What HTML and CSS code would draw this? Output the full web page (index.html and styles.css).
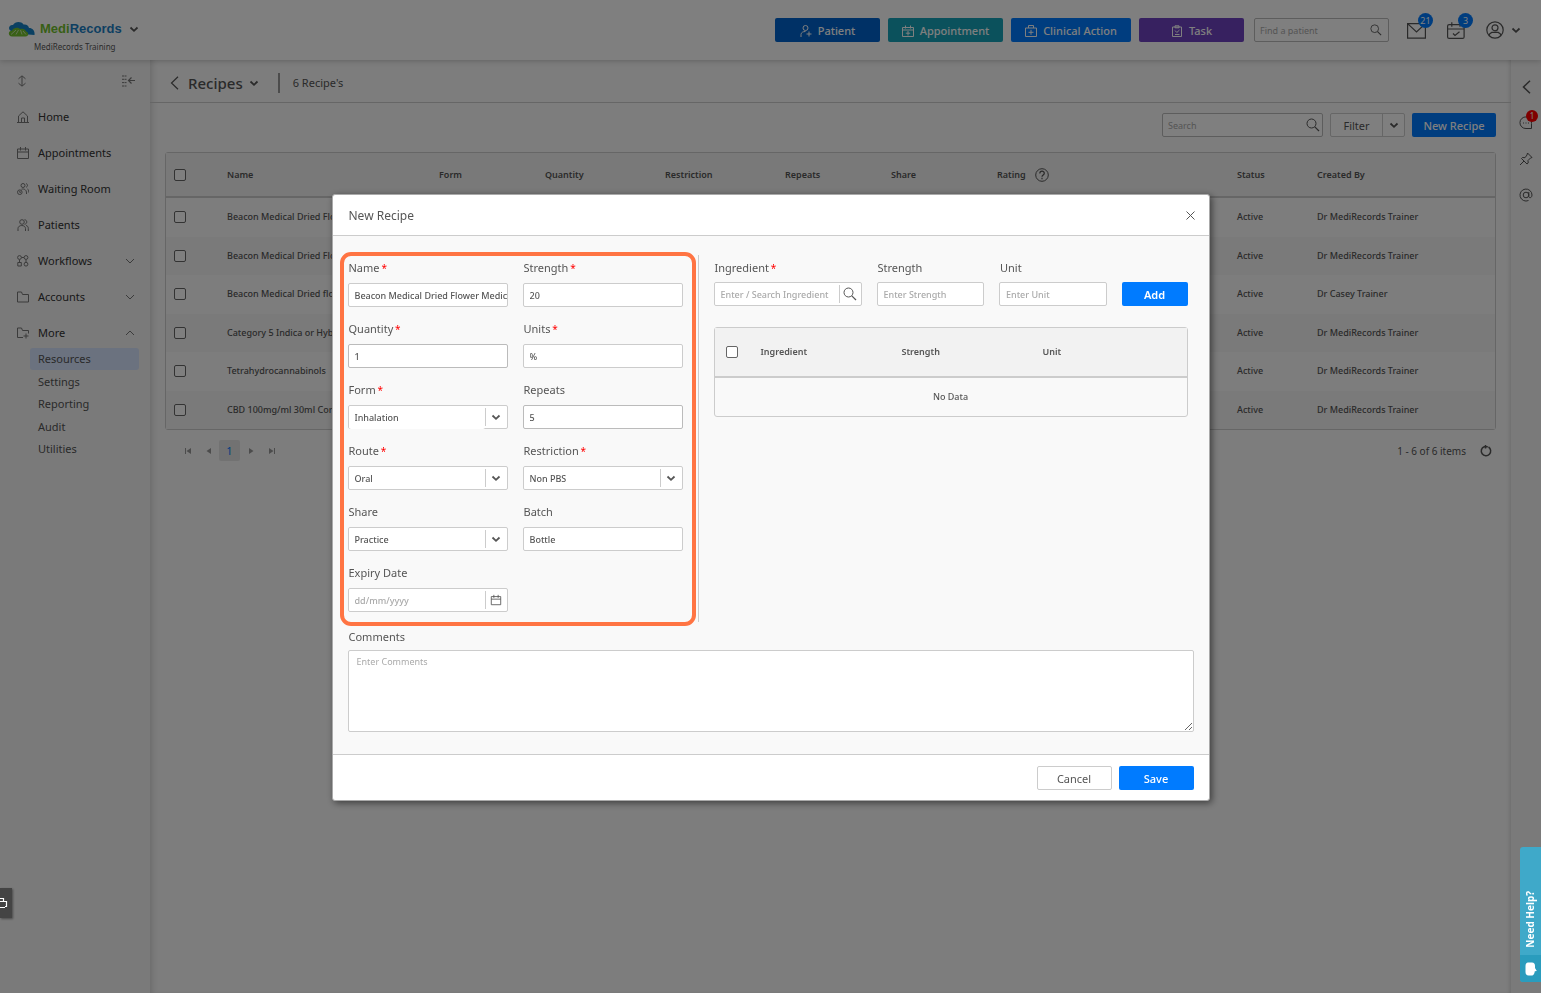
FILE: index.html
```html
<!DOCTYPE html>
<html lang="en">

<head>
    <meta charset="UTF-8">
    <meta name="viewport" content="width=device-width, initial-scale=1.0">
    <title>MediRecords - Recipes</title>
    <link rel="stylesheet" href="styles.css">
</head>

<body>
    <!-- Shared icons -->
    <svg class="icon-defs" aria-hidden="true">
        <symbol id="i-down" viewBox="0 0 10 10"><path d="M1.500 3.500L5 6.800l3.500-3.300" fill="none" stroke="currentColor" stroke-width="1.800"/></symbol>
        <symbol id="i-thin-down" viewBox="0 0 10 10"><path d="M1 3l4 4 4-4" fill="none" stroke="currentColor" stroke-width="1"/></symbol>
        <symbol id="i-search" viewBox="0 0 14 14"><circle cx="5.500" cy="5.500" r="4.500" fill="none" stroke="currentColor"/><path d="M8.800 8.800L13 13" stroke="currentColor" stroke-width="1.200"/></symbol>
        <symbol id="i-calendar" viewBox="0 0 14 14"><path d="M1.500 3h11v9.500h-11zM1.500 6h11M4.500 1v3.500M9.500 1v3.500" fill="none" stroke="currentColor" stroke-linejoin="round"/></symbol>
    </svg>

    <header class="topbar">
        <div class="brand">
            <div class="brand-row">
                <svg class="brand-logo" viewBox="0 0 27 15">
                    <path d="M3 9C-.5 7 1 2.500 5 3 7-.5 13-1 15.500 2.500c3-.5 5 1 5.500 3.500 4 0 6 3 5.500 7L14 12z" fill="#1480c4"/>
                    <path d="M4 14.500C0 14.500-.5 9 4 8.500 5.500 5.500 10 5 12 7c3-1 5.500.5 6 2.500 3 .5 3 5-.5 5z" fill="#72c02c"/>
                    <path d="M3 12.500l5-4.500M8 12.500l2.500-4.500M12.500 8l1.500 4.500M15 9l3 3.500" fill="none" stroke="#cfe8b8" stroke-width=".9"/>
                </svg>
                <span class="brand-name"><span class="brand-green">Medi</span>Records</span>
                <svg class="icon-10"><use href="#i-down"/></svg>
            </div>
            <div class="brand-sub">MediRecords Training</div>
        </div>
        <div class="topbar-actions">
            <button type="button" class="btn btn-patient">
                <svg class="icon-12" viewBox="0 0 12 12" fill="none" stroke="currentColor"><circle cx="5.500" cy="3" r="2.500"/><path d="M1 12V9.500C1 7.500 3 6.500 5.500 6.500M9 6.500v5M6.500 9h5"/></svg>
                Patient
            </button>
            <button type="button" class="btn btn-appointment">
                <svg class="icon-12" viewBox="0 0 12 12" fill="none" stroke="currentColor"><path d="M.5 2.500h11v9H.5zM.5 5h11M3.500.5v3M8.500.5v3M6 6v4.500M3.800 8.200h4.400"/></svg>
                Appointment
            </button>
            <button type="button" class="btn btn-clinical">
                <svg class="icon-12" viewBox="0 0 12 12" fill="none" stroke="currentColor"><path d="M.5 3h11v8.500H.5zM3.500 3V.5h5V3M6 4.800v5M3.500 7.300h5"/></svg>
                Clinical Action
            </button>
            <button type="button" class="btn btn-task">
                <svg class="icon-12" viewBox="0 0 12 12" fill="none" stroke="currentColor"><path d="M1.500 2h9v9.500h-9zM4 .8h4v2H4zM4 5.500l1.800 2L8.500 5M4 9.500h4.500"/></svg>
                Task
            </button>
        </div>
        <div class="search-box find-patient">
            <input type="text" placeholder="Find a patient" aria-label="Find a patient">
            <svg class="icon-12"><use href="#i-search"/></svg>
        </div>
        <div class="topbar-icons">
            <button type="button" class="icon-btn" aria-label="Messages">
                <svg width="19" height="17" viewBox="0 0 19 17" fill="none" stroke="currentColor" stroke-width="1.200"><path d="M.6 1.600h17.800v14.500H.6zM.6 1.600L9.500 10l8.900-8.400"/></svg>
                <span class="badge">21</span>
            </button>
            <button type="button" class="icon-btn" aria-label="Tasks">
                <svg width="18" height="17" viewBox="0 0 18 17" fill="none" stroke="currentColor" stroke-width="1.200"><rect x=".6" y="2.600" width="16.500" height="13.800" rx="1.500"/><path d="M.6 7h16.500M4.800.2v4.500M13 .2v4.500M6 11.500l2 2 4.500-3.800"/></svg>
                <span class="badge">3</span>
            </button>
            <button type="button" class="icon-btn user-btn" aria-label="Account">
                <svg width="18" height="18" viewBox="0 0 18 18" fill="none" stroke="currentColor" stroke-width="1.200"><circle cx="9" cy="9" r="8.200"/><circle cx="9" cy="6.800" r="3"/><path d="M3.500 15v-2l2.200-1.600h6.600l2.200 1.600v2"/></svg>
                <svg class="icon-10"><use href="#i-down"/></svg>
            </button>
        </div>
    </header>

    <div class="layout">
        <nav class="sidebar">
            <div class="sidebar-tools">
                <svg width="10" height="12" viewBox="0 0 10 12" fill="none" stroke="currentColor"><path d="M5 1v10M1.500 3.800L5 .8l3.500 3M1.500 8.200l3.500 3 3.500-3"/></svg>
                <svg width="13" height="12" viewBox="0 0 13 12" fill="none" stroke="currentColor"><path d="M0 1h5M0 4.300h5M0 7.600h5M0 11h5" stroke-dasharray="2 .5"/><path d="M13 5.500H6.500M9.500 2.500l-3 3 3 3" stroke-width="1.200"/></svg>
            </div>
            <ul class="menu">
                <li><a href="#">
                    <svg class="icon-12" viewBox="0 0 12 12" fill="none" stroke="currentColor"><path d="M0 11.500h12M1.500 11.500V5L6 .8 10.500 5v6.500M4.500 11.500V7h3v4.500"/></svg>
                    Home</a></li>
                <li><a href="#">
                    <svg class="icon-12" viewBox="1 1 12 12"><use href="#i-calendar" width="14" height="14"/></svg>
                    Appointments</a></li>
                <li><a href="#">
                    <svg class="icon-12" viewBox="0 0 12 12" fill="none" stroke="currentColor"><circle cx="6" cy="2.500" r="2"/><path d="M9 .6c2 .4 2 3.200 0 3.600M4.500 6.200c3-.8 5 .8 5 3.800v1M10.500 6c1 .5 1.200 1.500 1.200 3.500"/><circle cx="2.800" cy="9.200" r="2.300"/><path d="M2.800 7.800v1.600h1"/></svg>
                    Waiting Room</a></li>
                <li><a href="#">
                    <svg class="icon-12" viewBox="0 0 12 12" fill="none" stroke="currentColor"><circle cx="5" cy="3" r="2.300"/><path d="M7.500.7c3 .2 3 4.300 0 4.600M1 12V9.500c0-4 7.500-4 7.500 0V12M9 6.500c1.500.3 2.300 1.200 2.300 3V12"/></svg>
                    Patients</a></li>
                <li><a href="#">
                    <svg class="icon-12" viewBox="0 0 12 12" fill="none" stroke="currentColor"><circle cx="2.500" cy="2.500" r="1.900"/><circle cx="9" cy="2.500" r="1.900"/><circle cx="9" cy="9.200" r="1.900"/><path d="M.8 7.500h3.500V11H.8zM4.500 2.500H7M2.500 4.500v3M9 4.500v2.500"/></svg>
                    Workflows<svg class="icon-10 caret"><use href="#i-thin-down"/></svg></a></li>
                <li><a href="#">
                    <svg class="icon-12" viewBox="0 0 12 12" fill="none" stroke="currentColor"><path d="M.5 11V1h4l1 2.500h6V11z"/></svg>
                    Accounts<svg class="icon-10 caret"><use href="#i-thin-down"/></svg></a></li>
                <li><a href="#">
                    <svg class="icon-12" viewBox="0 0 12 12" fill="none" stroke="currentColor"><path d="M6 10.500H.5V1h4l1 2.500h6v3M9 6.500v5M6.500 9h5"/></svg>
                    More<svg class="icon-10 caret caret-up"><use href="#i-thin-down"/></svg></a>
                    <ul class="submenu">
                        <li><a href="#" class="active">Resources</a></li>
                        <li><a href="#">Settings</a></li>
                        <li><a href="#">Reporting</a></li>
                        <li><a href="#">Audit</a></li>
                        <li><a href="#">Utilities</a></li>
                    </ul>
                </li>
            </ul>
        </nav>

        <main class="content">
            <div class="page-title">
                <svg width="9" height="14" viewBox="0 0 9 14" fill="none" stroke="currentColor" stroke-width="1.200"><path d="M8 .8L1.500 7 8 13.200"/></svg>
                <h1>Recipes</h1>
                <svg class="icon-10"><use href="#i-down"/></svg>
                <span class="count">6 Recipe's</span>
            </div>

            <div class="toolbar">
                <div class="search-box grid-search">
                    <input type="text" placeholder="Search" aria-label="Search">
                    <svg class="icon-14"><use href="#i-search"/></svg>
                </div>
                <div class="filter">
                    <button type="button">Filter</button>
                    <button type="button" aria-label="Filter options"><svg class="icon-10"><use href="#i-down"/></svg></button>
                </div>
                <button type="button" class="btn btn-primary">New Recipe</button>
            </div>

            <div class="grid-wrap">
                <table class="grid">
                    <colgroup>
                        <col class="c-check"><col class="c-name"><col class="c-small"><col class="c-mid"><col class="c-mid">
                        <col class="c-small"><col class="c-small"><col class="c-rating"><col class="c-status"><col>
                    </colgroup>
                    <thead>
                        <tr>
                            <th><input type="checkbox" aria-label="Select all"></th>
                            <th>Name</th>
                            <th>Form</th>
                            <th>Quantity</th>
                            <th>Restriction</th>
                            <th>Repeats</th>
                            <th>Share</th>
                            <th><span class="rating">Rating
                                <svg width="14" height="14" viewBox="0 0 14 14" fill="none" stroke="currentColor"><circle cx="7" cy="7" r="6.300"/><path d="M4.800 5.500c0-3 4.500-3 4.500-.3 0 1.800-2.300 1.700-2.300 3.600M7 9.800v1.400" stroke-width="1.200"/></svg></span></th>
                            <th>Status</th>
                            <th>Created By</th>
                        </tr>
                    </thead>
                    <tbody>
                        <tr><td><input type="checkbox" aria-label="Select row"></td><td>Beacon Medical Dried Flower</td><td></td><td></td><td></td><td></td><td></td><td></td><td>Active</td><td>Dr MediRecords Trainer</td></tr>
                        <tr><td><input type="checkbox" aria-label="Select row"></td><td>Beacon Medical Dried Flower</td><td></td><td></td><td></td><td></td><td></td><td></td><td>Active</td><td>Dr MediRecords Trainer</td></tr>
                        <tr><td><input type="checkbox" aria-label="Select row"></td><td>Beacon Medical Dried flower</td><td></td><td></td><td></td><td></td><td></td><td></td><td>Active</td><td>Dr Casey Trainer</td></tr>
                        <tr><td><input type="checkbox" aria-label="Select row"></td><td>Category 5 Indica or Hybrid</td><td></td><td></td><td></td><td></td><td></td><td></td><td>Active</td><td>Dr MediRecords Trainer</td></tr>
                        <tr><td><input type="checkbox" aria-label="Select row"></td><td>Tetrahydrocannabinols</td><td></td><td></td><td></td><td></td><td></td><td></td><td>Active</td><td>Dr MediRecords Trainer</td></tr>
                        <tr><td><input type="checkbox" aria-label="Select row"></td><td>CBD 100mg/ml 30ml Cord</td><td></td><td></td><td></td><td></td><td></td><td></td><td>Active</td><td>Dr MediRecords Trainer</td></tr>
                    </tbody>
                </table>
            </div>

            <div class="pager">
                <button type="button" aria-label="First page"><svg width="6" height="6" viewBox="0 0 6 6" fill="currentColor"><path d="M0 0h1v6H0zM6 0v6L1.500 3z"/></svg></button>
                <button type="button" aria-label="Previous page"><svg width="6" height="6" viewBox="0 0 6 6" fill="currentColor"><path d="M5 0v6L.5 3z"/></svg></button>
                <button type="button" class="current">1</button>
                <button type="button" aria-label="Next page"><svg width="6" height="6" viewBox="0 0 6 6" fill="currentColor"><path d="M1 0v6l4.500-3z"/></svg></button>
                <button type="button" aria-label="Last page"><svg width="6" height="6" viewBox="0 0 6 6" fill="currentColor"><path d="M5 0h1v6H5zM0 0v6l4.500-3z"/></svg></button>
                <span class="pager-info">1 - 6 of 6 items</span>
                <svg width="12" height="12" viewBox="0 0 12 12" fill="none" stroke="currentColor" stroke-width="1.500"><path d="M8.500 2A4.700 4.700 0 1 1 4 1.700M4 1.700h3.800M5.500 0v3.600"/></svg>
            </div>
        </main>

        <aside class="rightbar">
            <button type="button" class="icon-btn" aria-label="Expand"><svg width="9" height="14" viewBox="0 0 9 14" fill="none" stroke="currentColor" stroke-width="1.500"><path d="M8 .8L1.500 7 8 13.200"/></svg></button>
            <button type="button" class="icon-btn" aria-label="Chat">
                <svg width="14" height="14" viewBox="0 0 14 14" fill="none" stroke="currentColor"><path d="M12.500 12.500v-5A5.800 5.800 0 1 0 7 12.500zM4 7h1M6.500 7h1M9 7h1"/></svg>
                <span class="badge badge-red">1</span>
            </button>
            <button type="button" class="icon-btn" aria-label="Pin"><svg width="14" height="14" viewBox="0 0 14 14" fill="none" stroke="currentColor"><path d="M8.500 1l4.500 4.500-1.500.5-2.500 2.500.2 2.500-1.200 1L2.500 6.500l1-1 2.500.2L8 3zM5 9l-4 4"/></svg></button>
            <button type="button" class="icon-btn" aria-label="Mentions"><svg width="14" height="14" viewBox="0 0 14 14" fill="none" stroke="currentColor"><circle cx="7" cy="7" r="2.800"/><path d="M9.800 4v4.500c.3 2 3.200 1.500 3.200-1.500A6 6 0 1 0 9.500 12.500"/></svg></button>
        </aside>
    </div>

    <!-- New recipe popup -->
    <div class="overlay">
        <form class="modal" role="dialog" aria-labelledby="modalTitle" onsubmit="event.preventDefault();">
            <div class="modal-header">
                <h2 id="modalTitle">New Recipe</h2>
                <button type="button" class="icon-btn" aria-label="Close"><svg width="9" height="9" viewBox="0 0 9 9" stroke="currentColor"><path d="M.5.5l8 8M8.500.5l-8 8"/></svg></button>
            </div>

            <div class="modal-body">
                <div class="columns">
                    <div class="details">
                        <div class="field">
                            <label for="name">Name <em>*</em></label>
                            <input type="text" id="name" value="Beacon Medical Dried Flower Medicinal">
                        </div>
                        <div class="field">
                            <label for="strength">Strength <em>*</em></label>
                            <input type="text" id="strength" value="20">
                        </div>
                        <div class="field">
                            <label for="quantity">Quantity <em>*</em></label>
                            <input type="text" id="quantity" class="dark" value="1">
                        </div>
                        <div class="field">
                            <label for="units">Units <em>*</em></label>
                            <input type="text" id="units" value="%">
                        </div>
                        <div class="field">
                            <label for="form">Form <em>*</em></label>
                            <div class="combo combo-flat">
                                <select id="form"><option>Inhalation</option></select>
                                <span class="combo-arrow"><svg class="icon-10"><use href="#i-down"/></svg></span>
                            </div>
                        </div>
                        <div class="field">
                            <label for="repeats">Repeats</label>
                            <input type="text" id="repeats" class="dark" value="5">
                        </div>
                        <div class="field">
                            <label for="route">Route <em>*</em></label>
                            <div class="combo">
                                <select id="route"><option>Oral</option></select>
                                <span class="combo-arrow"><svg class="icon-10"><use href="#i-down"/></svg></span>
                            </div>
                        </div>
                        <div class="field">
                            <label for="restriction">Restriction <em>*</em></label>
                            <div class="combo">
                                <select id="restriction"><option>Non PBS</option></select>
                                <span class="combo-arrow"><svg class="icon-10"><use href="#i-down"/></svg></span>
                            </div>
                        </div>
                        <div class="field">
                            <label for="share">Share</label>
                            <div class="combo">
                                <select id="share"><option>Practice</option></select>
                                <span class="combo-arrow"><svg class="icon-10"><use href="#i-down"/></svg></span>
                            </div>
                        </div>
                        <div class="field">
                            <label for="batch">Batch</label>
                            <input type="text" id="batch" value="Bottle">
                        </div>
                        <div class="field">
                            <label for="expiry">Expiry Date</label>
                            <div class="combo">
                                <input type="text" id="expiry" placeholder="dd/mm/yyyy">
                                <span class="combo-arrow"><svg class="icon-12"><use href="#i-calendar"/></svg></span>
                            </div>
                        </div>
                    </div>

                    <div class="ingredients">
                        <div class="ingredient-form">
                            <div class="field">
                                <label for="ingredient">Ingredient <em>*</em></label>
                                <div class="combo">
                                    <input type="text" id="ingredient" placeholder="Enter / Search Ingredient">
                                    <span class="combo-arrow"><svg class="icon-14"><use href="#i-search"/></svg></span>
                                </div>
                            </div>
                            <div class="field">
                                <label for="ingStrength">Strength</label>
                                <input type="text" id="ingStrength" placeholder="Enter Strength">
                            </div>
                            <div class="field">
                                <label for="ingUnit">Unit</label>
                                <input type="text" id="ingUnit" placeholder="Enter Unit">
                            </div>
                            <button type="button" class="btn btn-primary btn-add">Add</button>
                        </div>
                        <div class="grid-wrap">
                            <table class="grid ingredient-grid">
                                <colgroup><col class="c-check"><col><col><col class="c-unit"></colgroup>
                                <thead>
                                    <tr><th><input type="checkbox" aria-label="Select all ingredients"></th><th>Ingredient</th><th>Strength</th><th>Unit</th></tr>
                                </thead>
                                <tbody>
                                    <tr><td colspan="4">No Data</td></tr>
                                </tbody>
                            </table>
                        </div>
                    </div>
                </div>

                <div class="comments field">
                    <label for="comments">Comments</label>
                    <textarea id="comments" placeholder="Enter Comments"></textarea>
                </div>
            </div>

            <div class="modal-footer">
                <button type="button" class="btn btn-default">Cancel</button>
                <button type="submit" class="btn btn-primary">Save</button>
            </div>
        </form>
    </div>

    <button type="button" class="help-tab">
        <span class="help-text">Need Help?</span>
        <span class="help-icon"><svg width="12" height="14" viewBox="0 0 12 14" fill="#fff"><path d="M3 .5h4c2 0 3 1.500 3 3.500v2l1.800 3-2 .3C9.500 12 8.500 13.500 7 13.500H3.500C1.500 13.500.5 12 .5 10V4C.5 2 1.500.5 3 .5z"/></svg></span>
    </button>
    <button type="button" class="print-tab" aria-label="Print">
        <svg width="8" height="12" viewBox="0 0 8 12" fill="none" stroke="#fff"><path d="M0 1.500h3.500V4M0 4.500h6.500v5H5M0 10.500h5" stroke-width="1.200"/></svg>
    </button>
</body>

</html>
```
FILE: styles.css
```css
* {
    box-sizing: border-box;
}

body {
    margin: 0;
    min-height: 100vh;
    display: flex;
    flex-direction: column;
    font-family: "Noto Sans", "Open Sans", sans-serif;
    font-size: 11px;
    line-height: 16px;
    color: #555;
    background: #fafafa;
}

button,
input,
select,
textarea {
    font-family: inherit;
    font-size: 9px;
    color: #555;
}

button {
    cursor: pointer;
    padding: 0;
}

input[type="text"],
select,
textarea {
    background: #fff;
    border: 1px solid #ccc;
    border-radius: 2px;
    outline: none;
}

input::placeholder,
textarea::placeholder {
    color: #aaa;
    opacity: 1;
}

input[type="checkbox"] {
    appearance: none;
    display: block;
    width: 12px;
    height: 12px;
    margin: 0;
    background: #fff;
    border: 1px solid #666;
    border-radius: 2px;
}

h1,
h2,
ul {
    margin: 0;
    padding: 0;
    font-weight: 400;
}

ul {
    list-style: none;
}

a {
    color: inherit;
    text-decoration: none;
}

svg {
    flex: none;
}

.icon-defs {
    position: absolute;
    width: 0;
    height: 0;
}

.icon-10 {
    width: 10px;
    height: 10px;
}

.icon-12 {
    width: 12px;
    height: 12px;
}

.icon-14 {
    width: 14px;
    height: 14px;
}

/* Buttons */
.btn {
    display: flex;
    align-items: center;
    justify-content: center;
    gap: 6px;
    height: 24px;
    border: none;
    border-radius: 2px;
    font-size: 11px;
    font-weight: 500;
    color: #fff;
}

.btn svg {
    margin-top: 2px;
}

.btn-patient {
    width: 105px;
    background: #0062cc;
}

.btn-appointment {
    width: 115px;
    background: #17a2b8;
}

.btn-clinical {
    width: 120px;
    background: #007bff;
}

.btn-task {
    width: 105px;
    background: #6f42c1;
}

.btn-primary {
    background: #007bff;
}

.btn-add {
    font-weight: 600;
}

.btn-default {
    background: #fff;
    border: 1px solid #ccc;
    font-weight: 400;
    color: #555;
}

.icon-btn {
    position: relative;
    display: flex;
    align-items: center;
    border: none;
    background: none;
}

.badge {
    position: absolute;
    top: -9px;
    left: 11px;
    width: 15px;
    height: 15px;
    border-radius: 50%;
    background: #007bff;
    color: #fff;
    font-size: 9px;
    line-height: 15px;
    text-align: center;
}

.badge-red {
    left: 7px;
    width: 12px;
    height: 12px;
    background: #f00;
    font-size: 8px;
    line-height: 12px;
}

/* Top bar */
.topbar {
    position: relative;
    display: flex;
    align-items: center;
    height: 60px;
    padding: 0 20px 0 8px;
    background: #fff;
    box-shadow: 0 1px 6px rgba(0, 0, 0, 0.2);
}

.brand {
    margin-right: auto;
    padding-top: 16px;
}

.brand-row {
    display: flex;
    align-items: center;
}

.brand-row .icon-10 {
    margin-left: 7px;
}

.brand-logo {
    width: 27px;
    height: 15px;
    margin-right: 5px;
}

.brand-name {
    font-family: "Liberation Sans", Arial, sans-serif;
    font-size: 13px;
    font-weight: bold;
    color: #1b7fc4;
}

.brand-green {
    color: #6fbe2c;
}

.brand-sub {
    padding: 2px 0 0 26px;
    font-size: 8px;
}

.topbar-actions {
    display: flex;
    gap: 8px;
}

.search-box {
    display: flex;
    align-items: center;
    height: 24px;
    padding-right: 6px;
    background: #fff;
    border: 1px solid #bbb;
    border-radius: 2px;
}

.search-box input[type="text"] {
    flex: 1;
    min-width: 0;
    padding: 0 5px;
    border: none;
    background: none;
}

.find-patient {
    width: 135px;
    margin-left: 10px;
}

.topbar-icons {
    display: flex;
    align-items: center;
    gap: 21px;
    margin-left: 18px;
}

.user-btn {
    gap: 7px;
}

/* Page layout */
.layout {
    flex: 1;
    display: flex;
}

.sidebar {
    width: 150px;
    padding: 0 11px 0 15px;
    background: #f4f4f4;
}

.sidebar svg {
    color: #777;
}

.sidebar-tools {
    display: flex;
    align-items: center;
    justify-content: space-between;
    height: 39px;
    padding: 3px 4px 0 2px;
}

.menu > li > a {
    display: flex;
    align-items: center;
    gap: 9px;
    height: 36px;
    padding: 0 4px 0 2px;
    color: #333;
}

.caret {
    margin-left: auto;
}

.caret-up {
    transform: rotate(180deg);
}

.submenu {
    display: grid;
    grid-auto-rows: 1fr;
    height: 113px;
    margin: -3px 0 0 15px;
}

.submenu a {
    display: block;
    padding: 3px 8px;
    border-radius: 3px;
}

.submenu .active {
    background: #d6e4ff;
}

.content {
    flex: 1;
    min-width: 0;
    box-shadow: inset 6px 0 6px -4px rgba(0, 0, 0, 0.15), inset -4px 0 4px -3px rgba(0, 0, 0, 0.15);
}

.rightbar {
    display: flex;
    flex-direction: column;
    align-items: center;
    width: 30px;
    padding-top: 9px;
    background: #f4f4f4;
}

.rightbar .icon-btn {
    height: 36px;
}

.rightbar .badge {
    top: 5px;
}

.page-title {
    display: flex;
    align-items: center;
    height: 43px;
    padding: 4px 20px 0;
    border-bottom: 1px solid #ccc;
}

.page-title h1 {
    margin: 0 6px 0 9px;
    font-size: 15px;
    font-weight: 500;
}

.count {
    margin-left: 19px;
    padding-left: 13px;
    border-left: 2px solid #999;
    line-height: 20px;
}

.toolbar {
    display: flex;
    justify-content: flex-end;
    gap: 7px;
    padding: 10px 15px 15px;
}

.toolbar .btn-primary {
    width: 84px;
}

.grid-search {
    width: 161px;
    padding-right: 2px;
}

.filter {
    display: flex;
    width: 75px;
    border: 1px solid #ccc;
    border-radius: 2px;
    background: #fff;
}

.filter button {
    flex: 1;
    border: none;
    background: none;
    font-size: 11px;
}

.filter button + button {
    flex: 0 0 22px;
    border-left: 1px solid #ccc;
}

/* Grids */
.grid-wrap {
    border: 1px solid #ccc;
    border-radius: 3px;
}

.content .grid-wrap {
    margin: 0 15px;
}

.grid {
    width: 100%;
    height: 276px;
    table-layout: fixed;
    border-collapse: separate;
    border-spacing: 0;
    font-size: 9px;
    font-weight: 500;
}

.grid th,
.grid td {
    padding: 0 8px;
    text-align: left;
    white-space: nowrap;
}

.grid th {
    height: 45px;
    background: #f2f2f2;
    border-bottom: 2px solid #ccc;
    font-weight: 600;
}

.grid tbody tr:nth-child(even) {
    background: #f4f4f4;
}

.grid .c-check { width: 53px; }
.grid .c-name { width: 212px; }
.grid .c-small { width: 106px; }
.grid .c-mid { width: 120px; }
.grid .c-rating { width: 240px; }
.grid .c-status { width: 80px; }

.rating {
    display: flex;
    align-items: center;
    gap: 9px;
}

.pager {
    display: flex;
    align-items: center;
    padding: 10px 19px 0 27px;
    font-size: 10px;
}

.pager button {
    width: 21px;
    height: 21px;
    border: none;
    border-radius: 2px;
    background: none;
    color: #999;
}

.pager .current {
    background: #e4e4e4;
    color: #007bff;
    font-size: 11px;
}

.pager-info {
    margin: 0 14px 0 auto;
}

/* Popup */
.overlay {
    position: fixed;
    inset: 0;
    display: flex;
    align-items: center;
    justify-content: center;
    padding-top: 2px;
    background: rgba(0, 0, 0, 0.5);
}

.modal {
    width: 878px;
    max-width: 100%;
    background: #fff;
    border: 1px solid #aaa;
    border-radius: 3px;
    box-shadow: 2px 2px 7px rgba(0, 0, 0, 0.5);
}

.modal-header {
    display: flex;
    align-items: center;
    justify-content: space-between;
    height: 41px;
    padding: 0 14px 0 16px;
    border-bottom: 1px solid #ccc;
}

.modal-header h2 {
    padding-top: 2px;
    font-size: 12px;
}

.modal-body {
    padding: 16px 15px 22px 7px;
    background: #f9f9f9;
}

.columns {
    display: flex;
}

.details {
    display: grid;
    grid-template-columns: 160px 160px;
    gap: 14px 15px;
    padding: 4px 9px 10px 4px;
    border: 4px solid #ff7443;
    border-radius: 11px;
}

.field label {
    display: block;
    margin-bottom: 7px;
    padding-left: 1px;
}

.field em {
    margin-left: -1px;
    color: #f00;
    font-size: 10px;
    font-style: normal;
}

.field input[type="text"],
.combo {
    display: block;
    width: 100%;
    height: 24px;
    padding: 0 0 0 6px;
}

.field input.dark {
    border-color: #bbb;
}

.combo {
    display: flex;
    padding: 0;
    background: #fff;
    border: 1px solid #ccc;
    border-radius: 2px;
}

.field .combo select,
.field .combo input[type="text"] {
    flex: 1;
    min-width: 0;
    height: 22px;
    padding: 0 0 0 6px;
    border: none;
    appearance: none;
}

.field input,
.field select {
    font-weight: 500;
}

.combo-arrow {
    display: flex;
    align-items: center;
    justify-content: center;
    width: 22px;
    margin: 2px 0;
    border-left: 1px solid #ccc;
}

.field .combo-flat select {
    height: 23px;
}

.ingredients {
    flex: 1;
    margin: 3px 0 4px 2px;
    padding: 5px 6px 0 15px;
    border-left: 1px solid #ccc;
}

.ingredient-form {
    display: grid;
    grid-template-columns: 148px 1fr 1fr 66px;
    gap: 15px;
    align-items: end;
    margin-bottom: 21px;
}

.ingredient-form label {
    margin-bottom: 6px;
}

.ingredient-grid {
    height: 88px;
}

.ingredient-grid .c-check {
    width: 38px;
}

.ingredient-grid .c-unit {
    width: 152px;
}

.ingredient-grid th {
    height: 50px;
}

.ingredient-grid th:first-child {
    padding-left: 11px;
}

.ingredient-grid td {
    text-align: center;
}

.comments {
    padding: 3px 0 0 8px;
}

.comments label {
    margin-bottom: 5px;
}

.comments textarea {
    display: block;
    width: 100%;
    height: 82px;
    padding: 4px 8px;
    resize: vertical;
}

.modal-footer {
    display: flex;
    justify-content: flex-end;
    gap: 7px;
    padding: 11px 15px 10px;
    border-top: 1px solid #ccc;
}

.modal-footer .btn {
    width: 75px;
}

/* Side tabs */
.help-tab {
    position: fixed;
    right: 0;
    bottom: 11px;
    width: 21px;
    height: 135px;
    display: flex;
    flex-direction: column;
    justify-content: flex-end;
    align-items: stretch;
    border: none;
    border-radius: 3px 0 0 3px;
    background: #3fa9c9;
    overflow: hidden;
}

.help-text {
    writing-mode: vertical-rl;
    transform: rotate(180deg);
    padding: 7px 0;
    line-height: 21px;
    font-size: 10px;
    font-weight: bold;
    color: #fff;
}

.help-icon {
    display: flex;
    align-items: center;
    justify-content: center;
    height: 27px;
    background: #2a9cbd;
}

.print-tab {
    position: fixed;
    left: 0;
    bottom: 75px;
    width: 12px;
    height: 30px;
    display: flex;
    align-items: center;
    border: none;
    background: #444;
    box-shadow: 1px 1px 2px rgba(0, 0, 0, 0.4);
}
```
